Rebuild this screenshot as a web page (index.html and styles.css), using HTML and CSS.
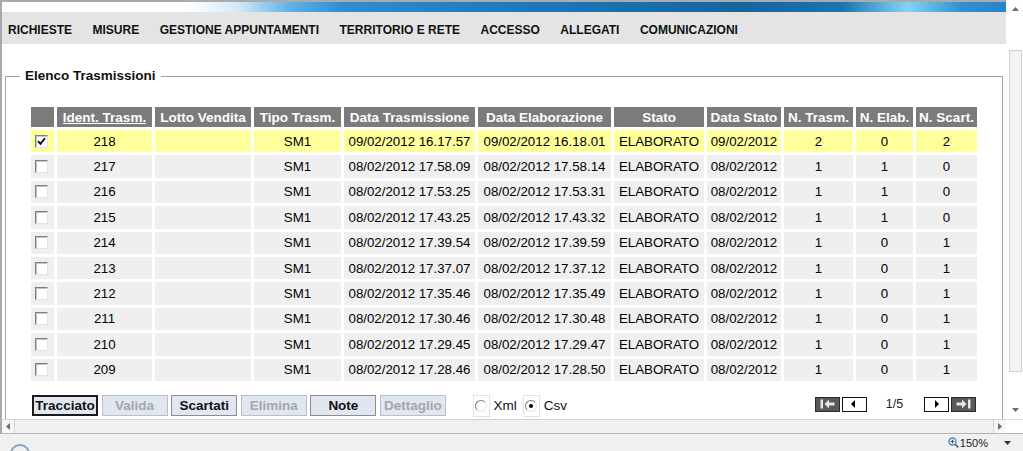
FILE: index.html
```html
<!DOCTYPE html>
<html lang="it">
<head>
    <meta charset="UTF-8">
    <meta name="viewport" content="width=device-width, initial-scale=1.0">
    <title>Elenco Trasmissioni</title>
    <link rel="stylesheet" href="styles.css">
</head>
<body>
    <div class="window">
        <div class="window-body">
            <div class="page">
                <div class="top-strip"></div>

                <!-- menu principale -->
                <ul class="menu">
                    <li>RICHIESTE</li>
                    <li>MISURE</li>
                    <li>GESTIONE APPUNTAMENTI</li>
                    <li>TERRITORIO E RETE</li>
                    <li>ACCESSO</li>
                    <li>ALLEGATI</li>
                    <li>COMUNICAZIONI</li>
                </ul>

                <div class="content">
                    <fieldset class="box">
                        <legend>Elenco Trasmissioni</legend>

                        <table class="grid">
                            <colgroup>
                                <col class="c-chk"><col class="c-id"><col class="c-lotto"><col class="c-tipo">
                                <col class="c-dtr"><col class="c-del"><col class="c-stato"><col class="c-dst">
                                <col class="c-ntr"><col class="c-nel"><col class="c-nsc">
                            </colgroup>
                            <thead>
                                <tr>
                                    <th></th>
                                    <th><span class="sort">Ident. Trasm.</span></th>
                                    <th>Lotto Vendita</th>
                                    <th>Tipo Trasm.</th>
                                    <th>Data Trasmissione</th>
                                    <th>Data Elaborazione</th>
                                    <th>Stato</th>
                                    <th>Data Stato</th>
                                    <th>N. Trasm.</th>
                                    <th>N. Elab.</th>
                                    <th>N. Scart.</th>
                                </tr>
                            </thead>
                            <tbody>
                                <tr class="sel">
                                    <td><span class="chk checked"><svg width="9" height="9" viewBox="0 0 9 9"><path d="M1 4.2 L3.4 6.8 L8 1.2" fill="none" stroke="#000" stroke-width="1.8"/></svg></span></td>
                                    <td>218</td><td></td><td>SM1</td><td>09/02/2012 16.17.57</td><td>09/02/2012 16.18.01</td><td>ELABORATO</td><td>09/02/2012</td><td>2</td><td>0</td><td>2</td>
                                </tr>
                                <tr>
                                    <td><span class="chk"></span></td>
                                    <td>217</td><td></td><td>SM1</td><td>08/02/2012 17.58.09</td><td>08/02/2012 17.58.14</td><td>ELABORATO</td><td>08/02/2012</td><td>1</td><td>1</td><td>0</td>
                                </tr>
                                <tr>
                                    <td><span class="chk"></span></td>
                                    <td>216</td><td></td><td>SM1</td><td>08/02/2012 17.53.25</td><td>08/02/2012 17.53.31</td><td>ELABORATO</td><td>08/02/2012</td><td>1</td><td>1</td><td>0</td>
                                </tr>
                                <tr>
                                    <td><span class="chk"></span></td>
                                    <td>215</td><td></td><td>SM1</td><td>08/02/2012 17.43.25</td><td>08/02/2012 17.43.32</td><td>ELABORATO</td><td>08/02/2012</td><td>1</td><td>1</td><td>0</td>
                                </tr>
                                <tr>
                                    <td><span class="chk"></span></td>
                                    <td>214</td><td></td><td>SM1</td><td>08/02/2012 17.39.54</td><td>08/02/2012 17.39.59</td><td>ELABORATO</td><td>08/02/2012</td><td>1</td><td>0</td><td>1</td>
                                </tr>
                                <tr>
                                    <td><span class="chk"></span></td>
                                    <td>213</td><td></td><td>SM1</td><td>08/02/2012 17.37.07</td><td>08/02/2012 17.37.12</td><td>ELABORATO</td><td>08/02/2012</td><td>1</td><td>0</td><td>1</td>
                                </tr>
                                <tr>
                                    <td><span class="chk"></span></td>
                                    <td>212</td><td></td><td>SM1</td><td>08/02/2012 17.35.46</td><td>08/02/2012 17.35.49</td><td>ELABORATO</td><td>08/02/2012</td><td>1</td><td>0</td><td>1</td>
                                </tr>
                                <tr>
                                    <td><span class="chk"></span></td>
                                    <td>211</td><td></td><td>SM1</td><td>08/02/2012 17.30.46</td><td>08/02/2012 17.30.48</td><td>ELABORATO</td><td>08/02/2012</td><td>1</td><td>0</td><td>1</td>
                                </tr>
                                <tr>
                                    <td><span class="chk"></span></td>
                                    <td>210</td><td></td><td>SM1</td><td>08/02/2012 17.29.45</td><td>08/02/2012 17.29.47</td><td>ELABORATO</td><td>08/02/2012</td><td>1</td><td>0</td><td>1</td>
                                </tr>
                                <tr>
                                    <td><span class="chk"></span></td>
                                    <td>209</td><td></td><td>SM1</td><td>08/02/2012 17.28.46</td><td>08/02/2012 17.28.50</td><td>ELABORATO</td><td>08/02/2012</td><td>1</td><td>0</td><td>1</td>
                                </tr>
                            </tbody>
                        </table>

                        <!-- pulsanti e paginazione -->
                        <div class="toolbar">
                            <button class="btn focus">Tracciato</button>
                            <button class="btn" disabled>Valida</button>
                            <button class="btn">Scartati</button>
                            <button class="btn" disabled>Elimina</button>
                            <button class="btn">Note</button>
                            <button class="btn" disabled>Dettaglio</button>

                            <label class="opt first"><span class="radio-box"><span class="radio"></span></span>Xml</label>
                            <label class="opt"><span class="radio-box"><span class="radio on"></span></span>Csv</label>

                            <div class="pager">
                                <span class="pg dark"><svg width="23" height="12" viewBox="0 0 23 12"><rect x="4.5" y="1.5" width="2.5" height="9" fill="#e6e6e6"/><path d="M8.5 6 L13 1.5 V4.5 H18.5 V7.5 H13 V10.5 Z" fill="#e6e6e6"/></svg></span>
                                <span class="pg"><svg width="23" height="12" viewBox="0 0 23 12"><path d="M8 6 L12 2 V10 Z" fill="#000"/></svg></span>
                                <span class="page-num">1/5</span>
                                <span class="pg"><svg width="23" height="12" viewBox="0 0 23 12"><path d="M14 6 L10 2 V10 Z" fill="#000"/></svg></span>
                                <span class="pg dark"><svg width="23" height="12" viewBox="0 0 23 12"><path d="M14.5 6 L10 1.5 V4.5 H4.5 V7.5 H10 V10.5 Z" fill="#e6e6e6"/><rect x="16" y="1.5" width="2.5" height="9" fill="#e6e6e6"/></svg></span>
                            </div>
                        </div>
                    </fieldset>
                </div>
            </div>

            <!-- barra di scorrimento verticale -->
            <div class="vscroll">
                <div class="sb-btn"><svg width="7" height="4" viewBox="0 0 7 4"><path d="M0 4 L3.5 0 L7 4 Z" fill="#6d6d6d"/></svg></div>
                <div class="sb-track"><div class="sb-thumb"></div></div>
                <div class="sb-btn"><svg width="7" height="4" viewBox="0 0 7 4"><path d="M0 0 L3.5 4 L7 0 Z" fill="#6d6d6d"/></svg></div>
            </div>
        </div>

        <div class="hbar">
            <div class="hscroll">
                <span class="hs-arrow"><svg width="4" height="7" viewBox="0 0 4 7"><path d="M4 0 L0 3.5 L4 7 Z" fill="#6d6d6d"/></svg></span>
                <span class="hs-thumb"></span>
                <span class="hs-arrow"><svg width="4" height="7" viewBox="0 0 4 7"><path d="M0 0 L4 3.5 L0 7 Z" fill="#6d6d6d"/></svg></span>
            </div>
            <div class="corner"></div>
        </div>

        <div class="statusbar">
            <span class="ie-logo"></span>
            <span class="zoom">
                <svg width="11" height="11" viewBox="0 0 11 11"><circle cx="4.5" cy="4.5" r="3.6" fill="#dbe9f7" stroke="#4d7fb8" stroke-width="1.2"/><path d="M2.8 4.5 H6.2 M4.5 2.8 V6.2" stroke="#2f5f99" stroke-width="1.1"/><path d="M7.2 7.2 L10.3 10.3" stroke="#666" stroke-width="1.8"/></svg>
                150%
            </span>
            <span class="zoom-arrow"><svg width="7" height="4" viewBox="0 0 7 4"><path d="M0 0 L3.5 4 L7 0 Z" fill="#333"/></svg></span>
        </div>
    </div>
</body>
</html>
```

FILE: styles.css
```css
* {
    box-sizing: border-box;
}

html, body {
    margin: 0;
    padding: 0;
    overflow: hidden;
}

body {
    width: 1023px;
    height: 451px;
    font-family: "Liberation Sans", Arial, sans-serif;
    background-color: #fff;
    color: #000;
}

.window {
    display: flex;
    flex-direction: column;
    height: 451px;
}

.window-body {
    display: flex;
    height: 419px;
}

.page {
    flex: 1;
    min-width: 0;
    display: flex;
    flex-direction: column;
    border-left: 2px solid #a9a9a9;
}

/* striscia colorata in alto */
.top-strip {
    height: 12px;
    border-top: 2px solid #ababab;
    background: linear-gradient(to right, #fff 0, #fff 185px, #d3eaf8 235px, #5cb0e6 290px, #2e8ed4 340px,
        #1d7bbf 500px, #15649f 740px, #1a74b4 840px, #84d3f3 905px, #2f90d1 960px, #2486c9 1004px);
}

.menu {
    list-style: none;
    margin: 0;
    height: 32px;
    padding: 4px 0 0 6px;
    display: flex;
    align-items: center;
    gap: 20.5px;
    background-color: #e4e4e4;
    font-size: 12px;
    font-weight: bold;
    color: #111;
}

.menu li {
    white-space: nowrap;
}

.content {
    flex: 1;
    overflow: hidden;
    padding: 24px 3px 0 3px;
}

/* riquadro elenco */
.box {
    margin: 0;
    min-width: 0;
    height: 420px;
    padding: 20px 22px 0 22px;
    border: 1px solid #a3a3a3;
}

.box legend {
    margin-left: -8px;
    padding: 0 5px;
    font-size: 13.5px;
    font-weight: bold;
    line-height: 16px;
    color: #111;
}

.grid {
    width: 952px;
    table-layout: fixed;
    border-collapse: separate;
    border-spacing: 3px;
}

.c-chk { width: 23px; }
.c-id { width: 95px; }
.c-lotto { width: 96px; }
.c-tipo { width: 87px; }
.c-dtr { width: 131px; }
.c-del { width: 133px; }
.c-stato { width: 90px; }
.c-dst { width: 74px; }
.c-ntr { width: 69px; }
.c-nel { width: 57px; }
.c-nsc { width: 61px; }

.grid th {
    height: 20px;
    padding: 0;
    background-color: #7b7b7b;
    color: #fff;
    font-size: 13.5px;
    font-weight: bold;
    white-space: nowrap;
    overflow: hidden;
}

.grid th .sort {
    text-decoration: underline;
}

.grid td {
    height: 22.4px;
    padding: 0;
    background-color: #efefef;
    text-align: center;
    font-size: 13.3px;
    white-space: nowrap;
}

.grid tr.sel td {
    background-color: #ffff9c;
}

.chk {
    display: flex;
    align-items: center;
    justify-content: center;
    width: 13px;
    height: 13px;
    margin-left: 4px;
    border: 1px solid;
    border-color: #7f7f7f #e3e3e3 #e3e3e3 #7f7f7f;
    background-color: #fff;
    box-shadow: inset 1px 1px 0 #c4c4c4;
}

/* riga pulsanti */
.toolbar {
    display: flex;
    align-items: center;
    width: 952px;
    margin-top: 11px;
    padding: 0 4px;
}

.btn {
    width: 66px;
    height: 21px;
    margin-right: 3.6px;
    padding: 0;
    border: 1px solid #8d8d8d;
    background-color: #e1e7f1;
    font-family: "Liberation Sans", Arial, sans-serif;
    font-size: 13.5px;
    font-weight: bold;
    color: #111;
}

.btn.focus {
    border: 2px solid #1b1b1b;
}

.btn:disabled {
    border-color: #b9bfc8;
    color: #a6a6a6;
}

.opt {
    display: flex;
    align-items: center;
    font-size: 13.5px;
    color: #111;
}

.opt.first {
    margin-left: 23px;
}

.opt + .opt {
    margin-left: 6px;
}

.radio-box {
    display: flex;
    align-items: center;
    justify-content: center;
    width: 17px;
    height: 22px;
    margin-right: 4px;
    background-color: #fff;
    border: 1px solid #e2e2e2;
}

.radio {
    display: flex;
    align-items: center;
    justify-content: center;
    width: 12px;
    height: 12px;
    border-radius: 50%;
    border: 1px solid;
    border-color: #7a7a7a #e6e6e6 #e6e6e6 #7a7a7a;
    background-color: #fff;
}

.radio.on::after {
    content: "";
    width: 4px;
    height: 4px;
    border-radius: 50%;
    background-color: #000;
}

.pager {
    display: flex;
    align-items: center;
    margin-left: auto;
    margin-top: -3px;
}

.pg {
    display: flex;
    align-items: center;
    justify-content: center;
    width: 25px;
    height: 15px;
    margin-left: 2px;
    border: 1px solid #111;
    background-color: #fff;
}

.pg.dark {
    background-color: #595959;
    border-color: #2a2a2a;
}

.page-num {
    width: 55px;
    text-align: center;
    font-size: 12.5px;
    color: #222;
}

/* barre di scorrimento finte */
.vscroll {
    width: 17px;
    display: flex;
    flex-direction: column;
    background-color: #fff;
}

.sb-btn {
    height: 18px;
    display: flex;
    align-items: center;
    justify-content: center;
    padding-left: 2px;
}

.sb-track {
    flex: 1;
    padding: 32px 1px 0 3px;
}

.sb-thumb {
    height: 322px;
    border: 1px solid #d0d0d0;
    background-color: #f3f3f3;
}

.hbar {
    display: flex;
    height: 14px;
}

.hscroll {
    flex: 1;
    display: flex;
    align-items: center;
    border-left: 2px solid #a9a9a9;
    border-top: 1px solid #d2d2d2;
    background-color: #f6f6f6;
}

.hs-arrow {
    display: flex;
    align-items: center;
    justify-content: center;
    width: 12px;
    height: 100%;
}

.hs-thumb {
    flex: 1;
    height: 100%;
    border-left: 1px solid #d6d6d6;
    border-right: 1px solid #d6d6d6;
    background-color: #f0f0f0;
}

.corner {
    width: 17px;
    background-color: #fff;
    border-top: 1px solid #e0e0e0;
}

.statusbar {
    flex: 1;
    display: flex;
    align-items: center;
    overflow: hidden;
    border-top: 1px solid #b5b5b5;
    background-color: #f0f0f0;
    font-size: 11px;
    color: #222;
}

.ie-logo {
    align-self: flex-start;
    width: 20px;
    height: 20px;
    margin: 10px 0 0 10px;
    border: 2px solid #7ea6c8;
    border-radius: 50%;
}

.zoom {
    display: flex;
    align-items: center;
    gap: 1px;
    margin-left: auto;
}

.zoom-arrow {
    display: flex;
    margin: 0 12px 0 16px;
}
```
